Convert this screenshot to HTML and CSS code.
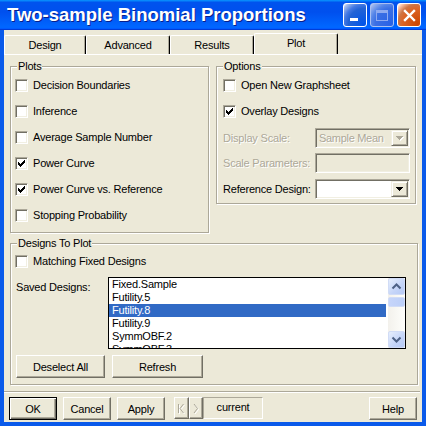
FILE: index.html
```html
<!DOCTYPE html>
<html lang="en">
<head>
<meta charset="utf-8">
<title>Two-sample Binomial Proportions</title>
<link rel="stylesheet" href="styles.css">
</head>
<body>
<div class="window">
  <div class="titlebar">
    <div class="title">Two-sample Binomial Proportions</div>
    <div class="caption-btns">
      <div class="cbtn cbtn-min"><span class="min-glyph"></span></div>
      <div class="cbtn cbtn-max"><span class="max-glyph"></span></div>
      <div class="cbtn cbtn-close">
        <svg width="13" height="13" viewBox="0 0 13 13"><path d="M2 2L11 11M11 2L2 11" stroke="#fff" stroke-width="2.4" stroke-linecap="square"/></svg>
      </div>
    </div>
  </div>
  <div class="client">
    <div class="tabs">
      <div class="tab tab-first">Design</div>
      <div class="tab">Advanced</div>
      <div class="tab">Results</div>
      <div class="tab tab-selected">Plot</div>
    </div>
    <div class="page">
      <div class="top-row">
        <div class="group group-plots">
          <span class="legend">Plots</span>
          <div class="check"><span class="box"></span><span>Decision Boundaries</span></div>
          <div class="check"><span class="box"></span><span>Inference</span></div>
          <div class="check"><span class="box"></span><span>Average Sample Number</span></div>
          <div class="check"><span class="box"><svg class="mark" width="11" height="11" viewBox="0 0 11 11"><path d="M8 2h1v1h-1z M7 3h2v1h-2z M2 4h1v1h-1z M6 4h3v1h-3z M2 5h2v1h-2z M5 5h3v1h-3z M2 6h5v1h-5z M3 7h3v1h-3z M4 8h1v1h-1z"/></svg></span><span>Power Curve</span></div>
          <div class="check"><span class="box"><svg class="mark" width="11" height="11" viewBox="0 0 11 11"><path d="M8 2h1v1h-1z M7 3h2v1h-2z M2 4h1v1h-1z M6 4h3v1h-3z M2 5h2v1h-2z M5 5h3v1h-3z M2 6h5v1h-5z M3 7h3v1h-3z M4 8h1v1h-1z"/></svg></span><span>Power Curve vs. Reference</span></div>
          <div class="check"><span class="box"></span><span>Stopping Probability</span></div>
        </div>
        <div class="group group-options">
          <span class="legend">Options</span>
          <div class="check"><span class="box"></span><span>Open New Graphsheet</span></div>
          <div class="check"><span class="box"><svg class="mark" width="11" height="11" viewBox="0 0 11 11"><path d="M8 2h1v1h-1z M7 3h2v1h-2z M2 4h1v1h-1z M6 4h3v1h-3z M2 5h2v1h-2z M5 5h3v1h-3z M2 6h5v1h-5z M3 7h3v1h-3z M4 8h1v1h-1z"/></svg></span><span>Overlay Designs</span></div>
          <div class="field field-display">
            <span class="field-label disabled-text">Display Scale:</span>
            <div class="combo combo-disabled">
              <span class="combo-text disabled-text">Sample Mean</span>
              <span class="combo-btn"><svg class="arrow arrow-disabled" width="8" height="5" viewBox="0 0 8 5"><path d="M0 0h7v1H0z M1 1h5v1H1z M2 2h3v1H2z M3 3h1v1H3z"/></svg></span>
            </div>
          </div>
          <div class="field field-scale">
            <span class="field-label disabled-text">Scale Parameters:</span>
            <div class="edit edit-disabled"></div>
          </div>
          <div class="field field-ref">
            <span class="field-label">Reference Design:</span>
            <div class="combo">
              <span class="combo-text"></span>
              <span class="combo-btn"><svg class="arrow" width="8" height="5" viewBox="0 0 8 5"><path d="M0 0h7v1H0z M1 1h5v1H1z M2 2h3v1H2z M3 3h1v1H3z"/></svg></span>
            </div>
          </div>
        </div>
      </div>
      <div class="group group-designs">
        <span class="legend">Designs To Plot</span>
        <div class="check"><span class="box"></span><span>Matching Fixed Designs</span></div>
        <div class="saved-row">
          <span class="saved-label">Saved Designs:</span>
          <div class="listbox">
            <div class="items">
              <div class="item">Fixed.Sample</div>
              <div class="item">Futility.5</div>
              <div class="item item-selected">Futility.8</div>
              <div class="item">Futility.9</div>
              <div class="item">SymmOBF.2</div>
              <div class="item">SymmOBF.3</div>
            </div>
            <div class="scrollbar">
              <div class="sb-btn"><svg width="15" height="15" viewBox="0 0 15 15"><path d="M3.5 9.5L7.5 5.5L11.5 9.5" fill="none" stroke="#4d6185" stroke-width="2"/></svg></div>
              <div class="sb-thumb"></div>
              <div class="sb-track"></div>
              <div class="sb-btn"><svg width="15" height="15" viewBox="0 0 15 15"><path d="M3.5 5.5L7.5 9.5L11.5 5.5" fill="none" stroke="#4d6185" stroke-width="2"/></svg></div>
            </div>
          </div>
        </div>
        <div class="group-buttons">
          <div class="btn btn-deselect">Deselect All</div>
          <div class="btn btn-refresh">Refresh</div>
        </div>
      </div>
    </div>
    <div class="separator"></div>
    <div class="footer">
      <div class="btn btn-default btn-ok">OK</div>
      <div class="btn btn-foot">Cancel</div>
      <div class="btn btn-foot">Apply</div>
      <div class="nav">
        <div class="btn nav-btn nav-first"><svg width="9" height="11" viewBox="0 0 9 11"><path d="M1.5 1V10M6.5 1L3 5.5L6.5 10" fill="none" stroke="#fff" stroke-width="1" transform="translate(1 1)"/><path d="M1.5 1V10M6.5 1L3 5.5L6.5 10" fill="none" stroke="#aca899" stroke-width="1"/></svg></div>
        <div class="btn nav-btn nav-next"><svg width="6" height="11" viewBox="0 0 6 11"><path d="M1 1L4.5 5.5L1 10" fill="none" stroke="#fff" stroke-width="1" transform="translate(1 1)"/><path d="M1 1L4.5 5.5L1 10" fill="none" stroke="#aca899" stroke-width="1"/></svg></div>
        <div class="current">current</div>
      </div>
      <div class="btn btn-foot btn-help">Help</div>
    </div>
  </div>
</div>
</body>
</html>
```

FILE: styles.css
```css
* { box-sizing: border-box; }
html, body { margin: 0; padding: 0; }
body {
  width: 426px;
  height: 426px;
  overflow: hidden;
  background: #0055ea;
  font-family: "Liberation Sans", Arial, sans-serif;
  font-size: 11px;
  letter-spacing: -0.2px;
  color: #000;
}
.window {
  width: 426px;
  height: 426px;
  display: flex;
  flex-direction: column;
  background: #0a5aea;
}
.titlebar {
  height: 30px;
  flex: none;
  display: flex;
  align-items: center;
  padding: 0 5px 0 7px;
  background: linear-gradient(180deg, #0997ff, #0053ee 8%, #0050ee 40%, #0066ff 88%, #0066ff 93%, #005bff 95%, #003dd7 96%, #003dd7);
}
.title {
  flex: 1;
  color: #fff;
  font-weight: bold;
  font-size: 18.5px;
  letter-spacing: 0;
  white-space: nowrap;
  text-shadow: 1px 1px #0a1f8a;
  padding-bottom: 1px;
}
.caption-btns { display: flex; gap: 3px; }
.cbtn {
  width: 24px;
  height: 24px;
  border: 1px solid #fff;
  border-radius: 3px;
  display: flex;
  align-items: center;
  justify-content: center;
}
.cbtn-min {
  background: radial-gradient(circle at 90% 90%, #0054e9 0%, #2263d5 55%, #4479e4 70%, #a3bbec 90%, #fff 100%);
  align-items: flex-end;
  justify-content: flex-start;
  padding: 0 0 5px 6px;
}
.min-glyph { width: 8px; height: 3px; background: #fff; }
.cbtn-max {
  background: radial-gradient(circle at 90% 90%, #2a62e6 0%, #3a6fe4 55%, #5585e8 70%, #9cb6ee 92%, #c9d7f5 100%);
  border-color: #a9c0f2;
}
.max-glyph {
  width: 12px;
  height: 11px;
  border: 1px solid #8eaaf0;
  border-top-width: 3px;
}
.cbtn-close {
  background: radial-gradient(circle at 90% 90%, #cc4600 0%, #dc6527 55%, #cd7546 70%, #ffccb2 90%, #fff 100%);
}
.client {
  flex: 1;
  margin: 0 4px 4px 4px;
  background: #ece9d8;
  display: flex;
  flex-direction: column;
}
.tabs {
  height: 25px;
  flex: none;
  display: flex;
  align-items: flex-end;
  border-bottom: 1px solid #fff;
}
.tab {
  width: 84px;
  height: 19px;
  border: 1px solid;
  border-bottom: 0;
  border-color: #fff #000 transparent #fff;
  border-radius: 2px 2px 0 0;
  box-shadow: inset -1px 0 #aca899;
  display: flex;
  align-items: center;
  justify-content: center;
  padding-bottom: 1px;
}
.tab-first { width: 82px; }
.tab-selected { height: 21px; padding-bottom: 3px; }
.page { padding: 11px 0 0 6px; }
.top-row { display: flex; align-items: flex-start; gap: 7px; }
.group {
  position: relative;
  border: 1px solid #aca899;
  box-shadow: inset 1px 1px #fff, 1px 1px #fff;
}
.legend {
  position: absolute;
  top: -7px;
  left: 6px;
  padding: 0 1px;
  line-height: 13px;
  background: #ece9d8;
}
.group-plots { width: 199px; height: 167px; padding: 5px 0 0 4px; }
.group-options { width: 200px; height: 138px; padding: 5px 0 0 6px; }
.group-designs { width: 408px; height: 142px; margin-top: 10px; padding: 4px 0 0 4px; }
.check {
  height: 26px;
  display: flex;
  align-items: center;
  gap: 5px;
  white-space: nowrap;
}
.box {
  width: 13px;
  height: 13px;
  flex: none;
  background: #fff;
  border: 1px solid;
  border-color: #aca899 #fff #fff #aca899;
  box-shadow: inset 1px 1px #716f64, inset -1px -1px #f1efe2;
  display: flex;
}
.mark { shape-rendering: crispEdges; fill: #000; }
.field { display: flex; align-items: center; height: 20px; }
.field-display { margin-top: 4px; }
.field-scale { margin-top: 5px; }
.field-ref { margin-top: 6px; }
.field-label { width: 92px; flex: none; white-space: nowrap; }
.disabled-text { color: #aca899; text-shadow: 1px 1px #fff; }
.combo, .edit {
  width: 95px;
  height: 20px;
  border: 1px solid;
  border-color: #aca899 #fff #fff #aca899;
  box-shadow: inset 1px 1px #716f64, inset -1px -1px #f1efe2;
  background: #fff;
}
.combo { display: flex; align-items: center; padding: 1px; }
.combo-disabled, .edit-disabled { background: #ece9d8; }
.combo-text { flex: 1; padding-left: 2px; white-space: nowrap; overflow: hidden; letter-spacing: -0.3px; }
.combo-btn {
  width: 17px;
  height: 16px;
  flex: none;
  background: #ece9d8;
  border: 1px solid;
  border-color: #f1efe2 #716f64 #716f64 #f1efe2;
  box-shadow: inset 1px 1px #fff, inset -1px -1px #aca899;
  display: flex;
  align-items: center;
  justify-content: center;
  padding-left: 1px;
}
.arrow { shape-rendering: crispEdges; fill: #000; }
.arrow-disabled { fill: #aca899; filter: drop-shadow(1px 1px 0 #fff); }
.saved-row { display: flex; margin-top: 3px; }
.saved-label { width: 93px; flex: none; padding: 4px 0 0 1px; line-height: 13px; }
.listbox {
  width: 298px;
  height: 72px;
  border: 1px solid #000;
  background: #fff;
  display: flex;
  overflow: hidden;
}
.items { flex: 1; overflow: hidden; }
.item { height: 13px; line-height: 13px; padding-left: 3px; white-space: nowrap; }
.item-selected { background: #316ac5; color: #fff; margin-right: 2px; }
.scrollbar {
  width: 17px;
  flex: none;
  display: flex;
  flex-direction: column;
  background: linear-gradient(90deg, #f3f1ec, #fefefb);
}
.sb-btn {
  width: 17px;
  height: 17px;
  flex: none;
  border: 1px solid #d1dcf6;
  border-radius: 2px;
  background: linear-gradient(135deg, #e6eefc, #c4d4f8 60%, #b7caf5);
  display: flex;
  align-items: center;
  justify-content: center;
}
.sb-thumb {
  height: 10px;
  margin-top: 2px;
  flex: none;
  border: 1px solid #d1dcf6;
  border-radius: 2px;
  background: linear-gradient(90deg, #c6d5fa, #bccff8);
}
.sb-track { flex: 1; }
.group-buttons { display: flex; gap: 7px; margin: 6px 0 0 1px; }
.btn {
  height: 23px;
  background: #ece9d8;
  border: 1px solid;
  border-color: #fff #716f64 #716f64 #fff;
  box-shadow: inset -1px -1px #aca899;
  display: flex;
  align-items: center;
  justify-content: center;
  white-space: nowrap;
}
.btn-deselect { width: 89px; }
.btn-refresh { width: 91px; }
.separator {
  height: 2px;
  flex: none;
  margin: 6px 2px 0 0;
  border-top: 1px solid #aca899;
  border-bottom: 1px solid #fff;
}
.footer {
  display: flex;
  margin-top: 4px;
  padding: 0 5px;
  height: 23px;
}
.btn-foot { width: 48px; margin-left: 6px; }
.btn-default {
  width: 48px;
  border: 1px solid #000;
  box-shadow: inset 1px 1px #fff, inset -1px -1px #716f64, inset -2px -2px #aca899;
}
.nav { display: flex; margin-left: 9px; height: 22px; }
.nav-btn { height: 22px; }
.nav-first { width: 15px; }
.nav-next { width: 14px; }
.current {
  width: 60px;
  height: 22px;
  border: 1px solid;
  border-color: #aca899 #fff #fff #aca899;
  display: flex;
  align-items: center;
  justify-content: center;
  padding-bottom: 2px;
}
.btn-help { margin-left: auto; }
```
